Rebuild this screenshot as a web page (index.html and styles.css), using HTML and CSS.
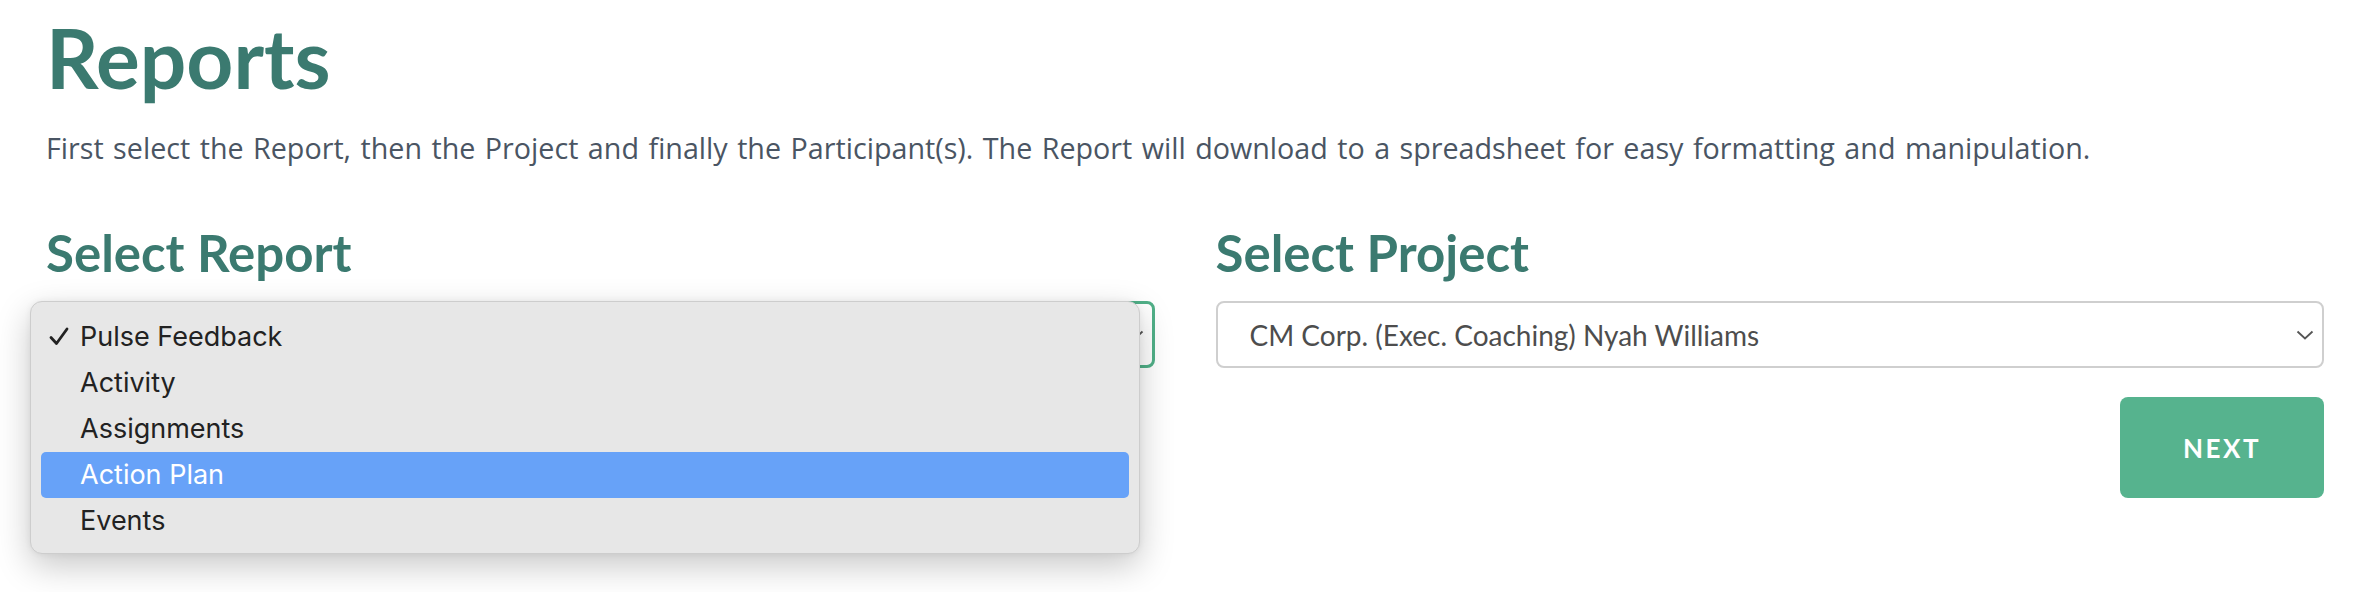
FILE: index.html
```html
<!DOCTYPE html>
<html lang="en">
<head>
    <meta charset="UTF-8">
    <title>Reports</title>
    <meta name="viewport" content="width=device-width, initial-scale=1">
    <link rel="stylesheet" href="styles.css">
</head>
<body>
    <main class="page">
        <h1 class="title">Reports</h1>
        <p class="intro">First select the Report, then the Project and finally the Participant(s). The Report will download to a spreadsheet for easy formatting and manipulation.</p>

        <div class="selectors">
            <section class="field">
                <h2>Select Report</h2>
                <div class="select-wrap">
                    <div class="select select-focus">
                        <span class="covered">Pulse Feedback</span>
                        <svg class="chevron" width="18" height="12" viewBox="0 0 18 12"><path d="M1.5 2.5 L9 9.5 L16.5 2.5" fill="none" stroke="#555" stroke-width="1.8"/></svg>
                    </div>
                    <ul class="dropdown">
                        <li class="checked">
                            <svg class="check" width="20" height="19" viewBox="0 0 20 19"><path d="M2 10.5 L7.5 16.5 L18 2" fill="none" stroke="#222" stroke-width="2.8" stroke-linecap="round" stroke-linejoin="round"/></svg>
                            Pulse Feedback
                        </li>
                        <li>Activity</li>
                        <li>Assignments</li>
                        <li class="active">Action Plan</li>
                        <li>Events</li>
                    </ul>
                </div>
            </section>

            <section class="field">
                <h2>Select Project</h2>
                <div class="select">
                    <span>CM Corp. (Exec. Coaching) Nyah Williams</span>
                    <svg class="chevron" width="18" height="12" viewBox="0 0 18 12"><path d="M1.5 2.5 L9 9.5 L16.5 2.5" fill="none" stroke="#555" stroke-width="1.8"/></svg>
                </div>
                <div class="actions">
                    <button class="btn-next" type="button">NEXT</button>
                </div>
            </section>
        </div>
    </main>
</body>
</html>
```

FILE: styles.css
```css
html, body {
    height: 100%;
}
body {
    margin: 0;
    padding: 0;
    background: #fff;
    font-family: Lato, 'Noto Sans', sans-serif;
    color: #4a5563;
}
.page {
    box-sizing: border-box;
    min-height: 100%;
    padding: 8px 34px 0 46px;
}
.title {
    margin: 0;
    font-size: 82px;
    line-height: 98px;
    font-weight: 700;
    color: #3b7a70;
}
.intro {
    margin: 24px 0 0;
    font-family: 'Open Sans', Lato, sans-serif;
    font-size: 28.7px;
    line-height: 36px;
    word-spacing: 2px;
    color: #4a5563;
}
.selectors {
    display: grid;
    grid-template-columns: 1fr 1fr;
    column-gap: 61px;
    margin-top: 57px;
}
.field h2 {
    margin: 0 0 18px;
    font-size: 51px;
    line-height: 60px;
    font-weight: 700;
    color: #3b7a70;
}
.select-wrap {
    position: relative;
}
.select {
    box-sizing: border-box;
    height: 67px;
    display: flex;
    align-items: center;
    justify-content: space-between;
    padding: 0 8px 0 32px;
    border: 2px solid #cfcfcf;
    border-radius: 8px;
    background: #fff;
    font-size: 28px;
    color: #4d4d4d;
}
.select-focus {
    border: 3px solid #50b088;
}
.covered {
    visibility: hidden;
}
.chevron {
    flex: none;
}
.dropdown {
    position: absolute;
    top: 0;
    left: -16px;
    width: 1110px;
    box-sizing: border-box;
    margin: 0;
    padding: 12px 10px 9px;
    list-style: none;
    background: #e7e7e7;
    border: 1px solid #cdcdcd;
    border-radius: 12px;
    box-shadow: 0 12px 34px rgba(0,0,0,0.22), 0 0 6px rgba(0,0,0,0.06);
    font-family: Inter, 'Noto Sans', sans-serif;
    font-size: 27px;
    color: #222;
}
.dropdown li {
    position: relative;
    height: 46px;
    line-height: 46px;
    padding-left: 39px;
    border-radius: 5px;
}
.check {
    position: absolute;
    left: 8px;
    top: 13px;
}
.dropdown li.active {
    background: #67a2f8;
    color: #fff;
}
.actions {
    display: flex;
    justify-content: flex-end;
    margin-top: 29px;
}
.btn-next {
    width: 204px;
    height: 101px;
    border: none;
    border-radius: 8px;
    background: #56b38e;
    color: #fff;
    font-family: Lato, 'Noto Sans', sans-serif;
    font-size: 26px;
    font-weight: 700;
    letter-spacing: 2.5px;
    cursor: pointer;
}
```
